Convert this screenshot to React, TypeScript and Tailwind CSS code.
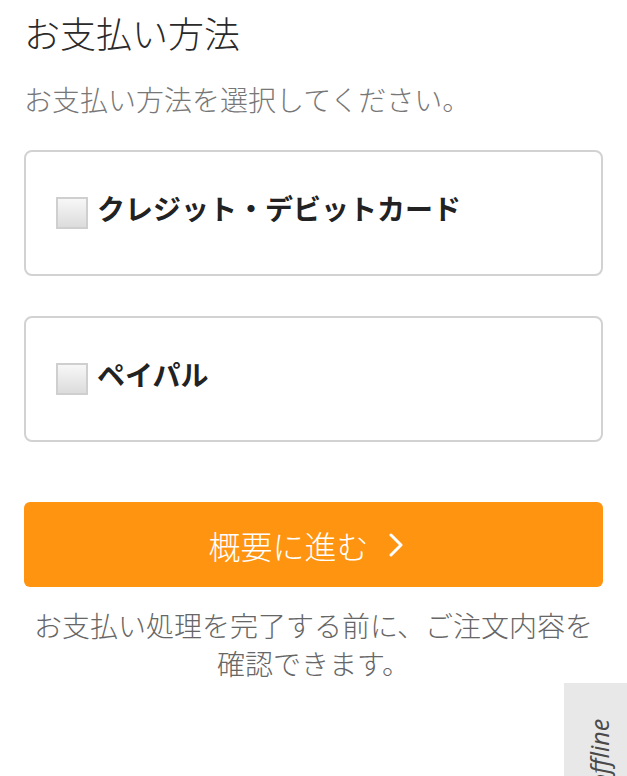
import React from "react";

const jp = { fontFamily: '"Noto Sans CJK JP", "Noto Sans", sans-serif' };

function Checkbox() {
  return (
    <span className="inline-block w-[32px] h-[32px] shrink-0 border-2 border-[#cfcfcf] bg-gradient-to-b from-[#f7f7f7] to-[#dcdcdc]" />
  );
}

function Option({ label }: { label: string }) {
  return (
    <label className="flex items-center h-[126px] border-2 border-[#d2d2d2] rounded-[8px] pl-[30px] bg-white">
      <Checkbox />
      <span className="ml-[9px] text-[28px] font-bold text-[#222] leading-none -mt-[10px]">{label}</span>
    </label>
  );
}

export default function App() {
  return (
    <div className="relative w-[627px] h-[776px] overflow-hidden bg-white" style={jp}>
      <div className="px-6">
        <h1 className="pt-[9px] text-[36px] leading-[46px] font-light text-[#2a2a2a]">お支払い方法</h1>
        <p className="mt-[25px] text-[28px] leading-[38px] font-light text-[#777]">お支払い方法を選択してください。</p>
        <div className="mt-[32px] flex flex-col gap-[40px]">
          <Option label="クレジット・デビットカード" />
          <Option label="ペイパル" />
        </div>
        <button className="mt-[60px] w-full h-[85px] rounded-[6px] bg-[#ff9411] text-white text-[32px] font-light flex items-center justify-center gap-[20px] pr-[16px]">
          <span>概要に進む</span>
          <svg width="14" height="24" viewBox="0 0 14 24" fill="none" stroke="white" strokeWidth="3" strokeLinecap="round" strokeLinejoin="round">
            <path d="M2 2 L12 12 L2 22" />
          </svg>
        </button>
        <p className="mt-[19px] text-center text-[28px] leading-[38px] font-light text-[#666]">
          お支払い処理を完了する前に、ご注文内容を
          <br />
          確認できます。
        </p>
      </div>
      <div className="absolute left-[564px] top-[683px] w-[63px] h-[93px] bg-[#e8e8e8] overflow-hidden">
        <span
          className="absolute block text-[25px] italic font-medium text-[#4a4a4a] whitespace-nowrap leading-none"
          style={{ fontFamily: '"Open Sans", sans-serif', transform: "rotate(-90deg)", transformOrigin: "0 0", top: 105, left: 23 }}
        >
          offline
        </span>
      </div>
    </div>
  );
}
